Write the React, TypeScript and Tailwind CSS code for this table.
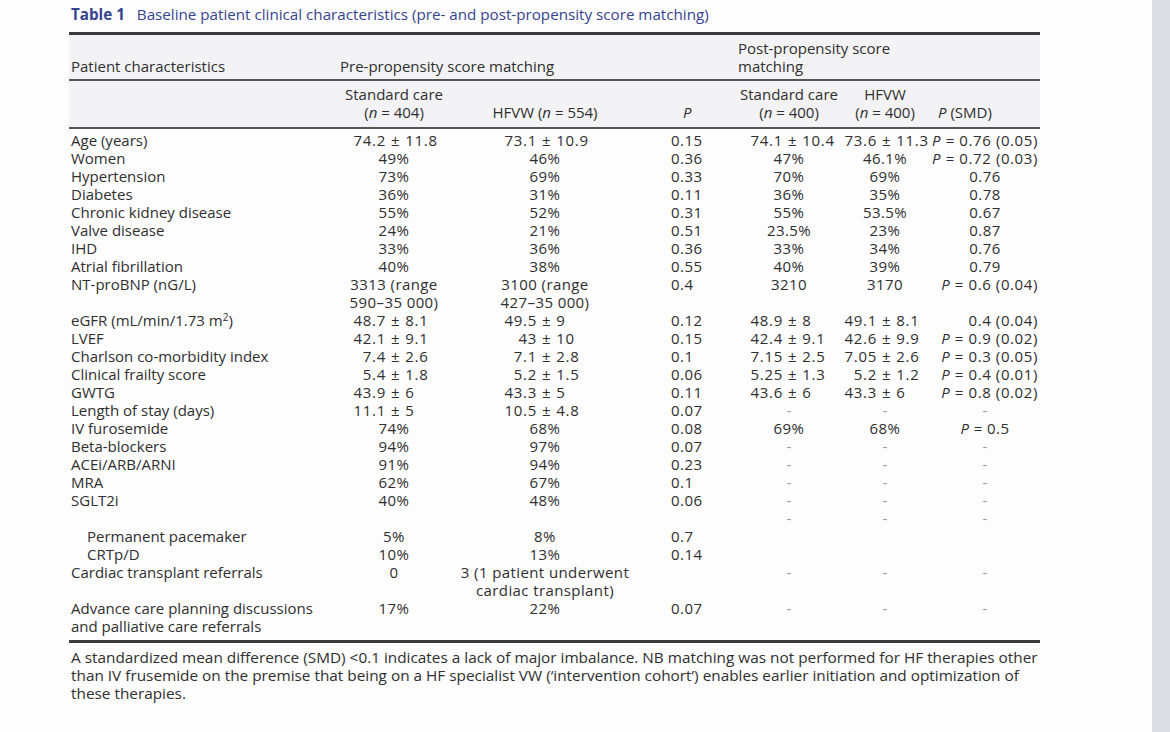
import React from 'react'

type Cell = string | { pm: [string, string] }

const GRID = 'grid grid-cols-[271px_108px_194px_96px_102px_90px_110px]'

// width from the column's left edge to where the number before "±" ends (index = body cell index)
const PM_W: Record<number, string> = {
  0: 'w-[46px]',
  1: 'w-[89px]',
  3: 'w-[45px]',
  4: 'w-[37px]',
}

interface Row {
  label: React.ReactNode
  cells: Cell[]
  indent?: boolean
}

const pm = (a: string, b: string): Cell => ({ pm: [a, b] })

const ROWS: Row[] = [
  { label: 'Age (years)', cells: [pm('74.2', '11.8'), pm('73.1', '10.9'), '0.15', pm('74.1', '10.4'), pm('73.6', '11.3'), 'P = 0.76 (0.05)'] },
  { label: 'Women', cells: ['49%', '46%', '0.36', '47%', '46.1%', 'P = 0.72 (0.03)'] },
  { label: 'Hypertension', cells: ['73%', '69%', '0.33', '70%', '69%', '0.76'] },
  { label: 'Diabetes', cells: ['36%', '31%', '0.11', '36%', '35%', '0.78'] },
  { label: 'Chronic kidney disease', cells: ['55%', '52%', '0.31', '55%', '53.5%', '0.67'] },
  { label: 'Valve disease', cells: ['24%', '21%', '0.51', '23.5%', '23%', '0.87'] },
  { label: 'IHD', cells: ['33%', '36%', '0.36', '33%', '34%', '0.76'] },
  { label: 'Atrial fibrillation', cells: ['40%', '38%', '0.55', '40%', '39%', '0.79'] },
  { label: 'NT-proBNP (nG/L)', cells: ['3313 (range\n590–35 000)', '3100 (range\n427–35 000)', '0.4', '3210', '3170', 'P = 0.6 (0.04)'] },
  {
    label: (
      <>
        eGFR (mL/min/1.73 m<sup className="text-[10px] leading-none">2</sup>)
      </>
    ),
    cells: [pm('48.7', '8.1'), pm('49.5', '9'), '0.12', pm('48.9', '8'), pm('49.1', '8.1'), '0.4 (0.04)'],
  },
  { label: 'LVEF', cells: [pm('42.1', '9.1'), pm('43', '10'), '0.15', pm('42.4', '9.1'), pm('42.6', '9.9'), 'P = 0.9 (0.02)'] },
  { label: 'Charlson co-morbidity index', cells: [pm('7.4', '2.6'), pm('7.1', '2.8'), '0.1', pm('7.15', '2.5'), pm('7.05', '2.6'), 'P = 0.3 (0.05)'] },
  { label: 'Clinical frailty score', cells: [pm('5.4', '1.8'), pm('5.2', '1.5'), '0.06', pm('5.25', '1.3'), pm('5.2', '1.2'), 'P = 0.4 (0.01)'] },
  { label: 'GWTG', cells: [pm('43.9', '6'), pm('43.3', '5'), '0.11', pm('43.6', '6'), pm('43.3', '6'), 'P = 0.8 (0.02)'] },
  { label: 'Length of stay (days)', cells: [pm('11.1', '5'), pm('10.5', '4.8'), '0.07', '-', '-', '-'] },
  { label: 'IV furosemide', cells: ['74%', '68%', '0.08', '69%', '68%', 'P = 0.5'] },
  { label: 'Beta-blockers', cells: ['94%', '97%', '0.07', '-', '-', '-'] },
  { label: 'ACEi/ARB/ARNI', cells: ['91%', '94%', '0.23', '-', '-', '-'] },
  { label: 'MRA', cells: ['62%', '67%', '0.1', '-', '-', '-'] },
  { label: 'SGLT2i', cells: ['40%', '48%', '0.06', '-', '-', '-'] },
  { label: '', cells: ['', '', '', '-', '-', '-'] },
  { label: 'Permanent pacemaker', indent: true, cells: ['5%', '8%', '0.7', '', '', ''] },
  { label: 'CRTp/D', indent: true, cells: ['10%', '13%', '0.14', '', '', ''] },
  { label: 'Cardiac transplant referrals', cells: ['0', '3 (1 patient underwent\ncardiac transplant)', '', '-', '-', '-'] },
  {
    label: (
      <>
        Advance care planning discussions
        <br />
        and palliative care referrals
      </>
    ),
    cells: ['17%', '22%', '0.07', '-', '-', '-'],
  },
]

function PText({ text }: { text: string }) {
  if (text.startsWith('P = ')) {
    return (
      <>
        <i>P</i>
        {text.slice(1)}
      </>
    )
  }
  return <>{text}</>
}

function BodyCell({ cell, col }: { cell: Cell; col: number }) {
  if (typeof cell !== 'string') {
    return (
      <div className="flex whitespace-nowrap tracking-[0.7px]">
        <span className={`${PM_W[col]} text-right shrink-0`}>{cell.pm[0]}</span>
        <span className="px-[5px]">±</span>
        <span>{cell.pm[1]}</span>
      </div>
    )
  }
  if (cell === '-') {
    return <div className="text-center text-[#9a9a9a]">-</div>
  }
  if (col === 2) {
    return <div className="pl-[29px] whitespace-nowrap tracking-[0.5px]">{cell}</div>
  }
  if (col === 5 && cell.includes('(')) {
    return (
      <div className="text-right pr-[2px] whitespace-nowrap tracking-[0.6px]">
        <PText text={cell} />
      </div>
    )
  }
  return (
    <div className="text-center whitespace-pre-line tracking-[0.4px]">
      <PText text={cell} />
    </div>
  )
}

export default function App() {
  return (
    <div className="flex h-[732px] w-[1170px] overflow-hidden bg-[#fdfdfd] font-['Open_Sans','Noto_Sans',sans-serif] text-[#2f2f2f]">
      <div className="flex-1">
        <div className="h-[32px] pt-[5px] pl-[71px] text-[15.2px] leading-[18px] text-[#36438f]">
          <span className="font-bold">Table 1</span>
          <span className="ml-[12px]">Baseline patient clinical characteristics (pre- and post-propensity score matching)</span>
        </div>

        <div className="ml-[69px] w-[971px] text-[15px] leading-[18px]">
          <div className="bg-[#f3f3f5] border-t-[3px] border-[#3c3c3c]">
            <div className={`${GRID} items-end pt-[4px] pb-[4px] border-b-2 border-[#555]`}>
              <div className="pl-[2px]">Patient characteristics</div>
              <div className="col-span-3">Pre-propensity score matching</div>
              <div className="col-span-3">
                Post-propensity score
                <br />
                matching
              </div>
            </div>
            <div className={`${GRID} items-end pt-[4px] pb-[6px] border-b-2 border-[#555]`}>
              <div />
              <div className="text-center">
                Standard care
                <br />
                (<i>n</i> = 404)
              </div>
              <div className="text-center">
                HFVW (<i>n</i> = 554)
              </div>
              <div className="pl-[41px]">
                <i>P</i>
              </div>
              <div className="text-center">
                Standard care
                <br />
                (<i>n</i> = 400)
              </div>
              <div className="text-center">
                HFVW
                <br />
                (<i>n</i> = 400)
              </div>
              <div className="pl-[8px]">
                <i>P</i> (SMD)
              </div>
            </div>
          </div>

          <div className="pt-[2px] pb-[5px] border-b-[3px] border-[#3c3c3c]">
            {ROWS.map((row, i) => (
              <div key={i} className={`${GRID} items-start`}>
                <div className={row.indent ? 'pl-[18px] whitespace-nowrap' : 'pl-[2px] whitespace-nowrap'}>
                  {row.label === '' ? '\u00a0' : row.label}
                </div>
                {row.cells.map((c, j) => (
                  <BodyCell key={j} cell={c} col={j} />
                ))}
              </div>
            ))}
          </div>

          <div className="pt-[5px] pl-[2px] text-[15.35px]">
            A standardized mean difference (SMD) &lt;0.1 indicates a lack of major imbalance. NB matching was not performed for HF therapies other
            <br />
            than IV frusemide on the premise that being on a HF specialist VW (‘intervention cohort’) enables earlier initiation and optimization of
            <br />
            these therapies.
          </div>
        </div>
      </div>
      <div className="w-[18px] shrink-0 bg-[#dcdce4]" />
    </div>
  )
}
